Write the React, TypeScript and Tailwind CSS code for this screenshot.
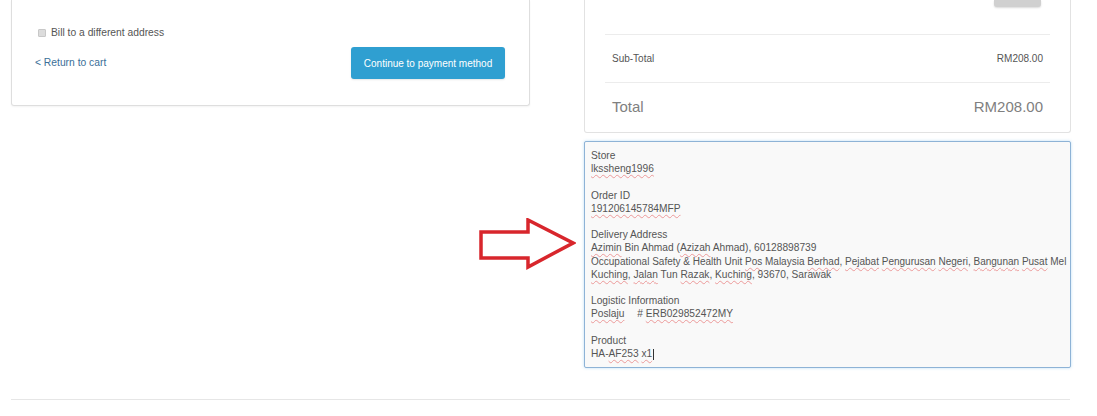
import React from 'react';

const sans = { fontFamily: '"Liberation Sans", Arial, sans-serif' };

function Typo({ children }: { children: React.ReactNode }) {
  return (
    <span className="underline decoration-wavy decoration-[#ec9a9a] decoration-1 underline-offset-2">
      {children}
    </span>
  );
}

function Arrow() {
  return (
    <svg width="100" height="52" viewBox="0 0 100 52" className="block">
      <path
        d="M5 14 L52 14 L52 2 L97 25 L52 49 L52 40 L5 40 Z"
        fill="none"
        stroke="#d8262c"
        strokeWidth="3.5"
        strokeLinejoin="miter"
      />
    </svg>
  );
}

export default function App() {
  return (
    <div className="w-[1097px] h-[416px] bg-white overflow-hidden text-[#555]" style={sans}>
      <div className="flex pl-[11px]">
        {/* Left: shipping form footer */}
        <div className="w-[519px] shrink-0">
          <div className="h-[106px] border border-t-0 border-[#dedede] rounded-b-[3px] shadow-[0_1px_2px_rgba(0,0,0,0.05)] pl-[24px] pr-[24px] pt-[26px]">
            <label className="flex items-center gap-[5px] text-[10.3px] leading-[13px] text-[#555]">
              <span className="ml-[2px] w-[8px] h-[8px] bg-[#dcdcdc] border border-[#c8c8c8] rounded-[1px]" />
              Bill to a different address
            </label>
            <div className="flex items-center justify-between mt-[8px]">
              <a className="text-[10.3px] text-[#3b6f98] -ml-[1px]">&lt; Return to cart</a>
              <button className="w-[154px] h-[32px] rounded-[3px] bg-[#2f9fd1] text-white text-[10px] shadow-[0_1px_2px_rgba(0,0,0,0.1)]">
                Continue to payment method
              </button>
            </div>
          </div>
          <div className="flex justify-end -mr-[46px] mt-[112px]">
            <Arrow />
          </div>
        </div>

        {/* Right: order summary + note */}
        <div className="ml-[54px] w-[487px] shrink-0">
          <div className="h-[133px] border border-t-0 border-[#e2e2e2] rounded-b-[3px] px-[20px]">
            <div className="flex justify-end pr-[9px]">
              <div className="w-[47px] h-[7px] bg-[#d0d0d0] rounded-b-[3px] shadow-[0_1px_2px_rgba(0,0,0,0.15)]" />
            </div>
            <div className="mt-[27px] border-t border-[#ececec] h-[48px] flex items-center justify-between px-[7px] text-[10px]">
              <span>Sub-Total</span>
              <span>RM208.00</span>
            </div>
            <div className="border-t border-[#ececec] h-[50px] flex items-center justify-between px-[7px] text-[15px] text-[#808080]">
              <span>Total</span>
              <span>RM208.00</span>
            </div>
          </div>

          <div className="mt-[8px] h-[227px] border border-[#8eb3d6] rounded-[2px] bg-[#f9f9f9] shadow-[0_0_3px_rgba(102,175,233,0.45)] pl-[6px] pt-[7px] text-[10.2px] leading-[13.2px] text-[#555]">
            <div>Store</div>
            <div><Typo>lkssheng1996</Typo></div>
            <div>&nbsp;</div>
            <div>Order ID</div>
            <div><Typo>191206145784MFP</Typo></div>
            <div>&nbsp;</div>
            <div>Delivery Address</div>
            <div>
              <Typo>Azimin</Typo> Bin Ahmad (<Typo>Azizah</Typo> Ahmad), 60128898739
            </div>
            <div className="whitespace-nowrap text-[10px]">
              Occupational Safety &amp; Health Unit <Typo>Pos</Typo> Malaysia <Typo>Berhad</Typo>, <Typo>Pejabat</Typo>{' '}
              <Typo>Pengurusan</Typo> <Typo>Negeri</Typo>, <Typo>Bangunan</Typo> <Typo>Pusat</Typo> Mel
            </div>
            <div>
              <Typo>Kuching</Typo>, <Typo>Jalan</Typo> Tun <Typo>Razak</Typo>, <Typo>Kuching</Typo>, 93670, Sarawak
            </div>
            <div>&nbsp;</div>
            <div>Logistic Information</div>
            <div>
              <Typo>Poslaju</Typo>
              <span className="inline-block w-[10px]" /> # <Typo>ERB029852472MY</Typo>
            </div>
            <div>&nbsp;</div>
            <div>Product</div>
            <div>
              HA-<Typo>AF253</Typo> <Typo>x1</Typo>
              <span className="inline-block w-px h-[11px] bg-[#333] align-middle ml-px" />
            </div>
          </div>
        </div>
      </div>

      <div className="mt-[31px] mx-[11px] w-[1059px] border-t border-[#e6e6e6]" />
    </div>
  );
}
